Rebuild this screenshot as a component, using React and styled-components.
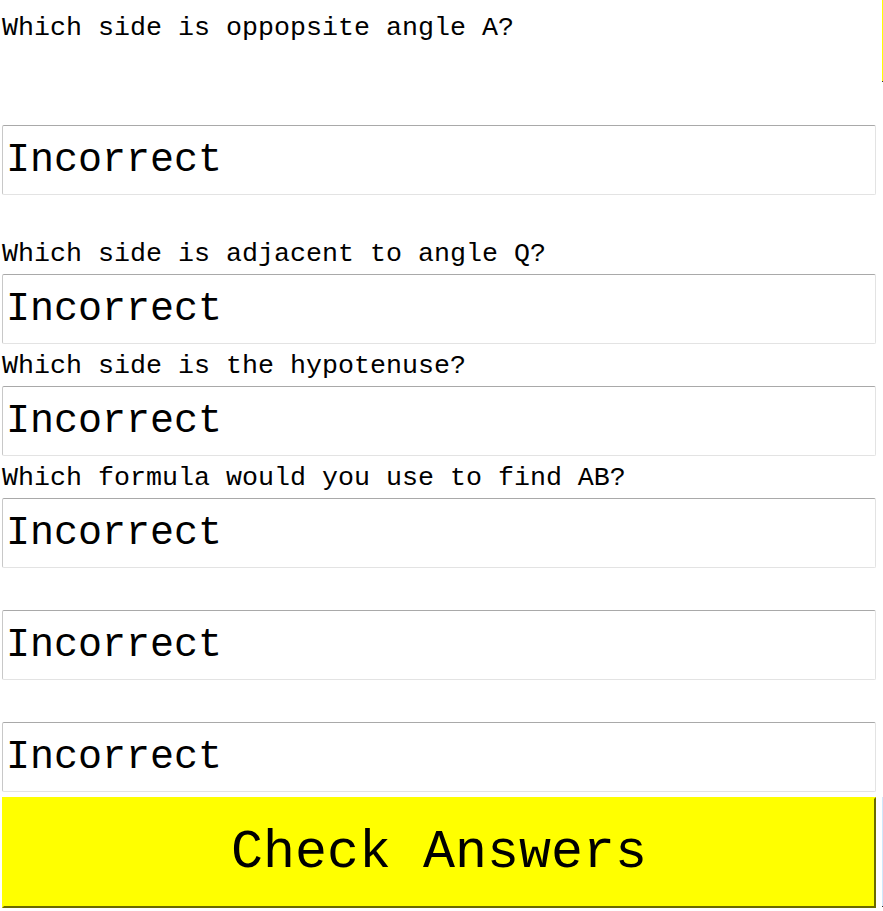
import React from 'react';
import styled, { createGlobalStyle } from 'styled-components';

const GlobalStyle = createGlobalStyle`
  html, body {
    margin: 0;
    padding: 0;
    background: #fff;
    overflow: hidden;
  }
  body {
    font-family: 'Courier New', 'Nimbus Mono PS', Courier, 'Liberation Mono', monospace;
    color: #000;
  }
`;

const monoStack = `'Courier New', 'Nimbus Mono PS', Courier, 'Liberation Mono', monospace`;

const Page = styled.div`
  display: flex;
  align-items: flex-start;
  padding-left: 2px;
`;

const Quiz = styled.div`
  width: 874px;
  flex-shrink: 0;
  display: flex;
  flex-direction: column;
`;

// the diagram column sits to the right, only its edge shows in the window
const Side = styled.div`
  flex: 1;
  min-width: 0;
  margin-left: 6px;
  display: flex;
  flex-direction: column;
`;

const Diagram = styled.div`
  height: 81px;
  background: #ffff00;
  border-bottom: 1px solid #333;
`;

const SideSpacer = styled.div`
  height: 715px;
`;

const Panel = styled.div`
  height: 109px;
  background: #cfe8fb;
  border-bottom: 1px solid #333;
`;

const Question = styled.div`
  font-size: 26.67px;
  line-height: 30px;
  min-height: 30px;
  margin-top: ${(p) => p.$top ?? 7}px;
  margin-bottom: ${(p) => p.$bottom ?? 5}px;
  white-space: pre;
`;

const Answer = styled.input`
  box-sizing: border-box;
  width: 874px;
  height: 70px;
  margin: 0;
  padding: 0 3px;
  font-family: ${monoStack};
  font-size: 40px;
  color: #000;
  background: #fff;
  border: 1px solid;
  border-color: #a9a9a9 #e3e3e3 #e3e3e3 #c8c8c8;
  border-radius: 2px;
  outline: none;
`;

const CheckButton = styled.button`
  box-sizing: border-box;
  width: 874px;
  height: 111px;
  margin-top: 5px;
  padding: 0;
  font-family: ${monoStack};
  font-size: 53.33px;
  color: #000;
  background: #ffff00;
  border: 2px solid;
  border-color: #ffff00 #6b6b00 #6b6b00 #ffff00;
  cursor: pointer;
`;

const questions = [
  { text: 'Which side is oppopsite angle A?', top: 13, bottom: 82 },
  { text: 'Which side is adjacent to angle Q?', top: 44 },
  { text: 'Which side is the hypotenuse?' },
  { text: 'Which formula would you use to find AB?' },
  { text: ' ' },
  { text: ' ' },
];

const App = () => {
  return (
    <>
      <GlobalStyle />
      <Page>
        <Quiz>
          {questions.map((q, i) => (
            <React.Fragment key={i}>
              <Question $top={q.top} $bottom={q.bottom}>{q.text}</Question>
              <Answer defaultValue="Incorrect" readOnly />
            </React.Fragment>
          ))}
          <CheckButton>Check Answers</CheckButton>
        </Quiz>
        <Side>
          <Diagram />
          <SideSpacer />
          <Panel />
        </Side>
      </Page>
    </>
  );
};

export default App;
